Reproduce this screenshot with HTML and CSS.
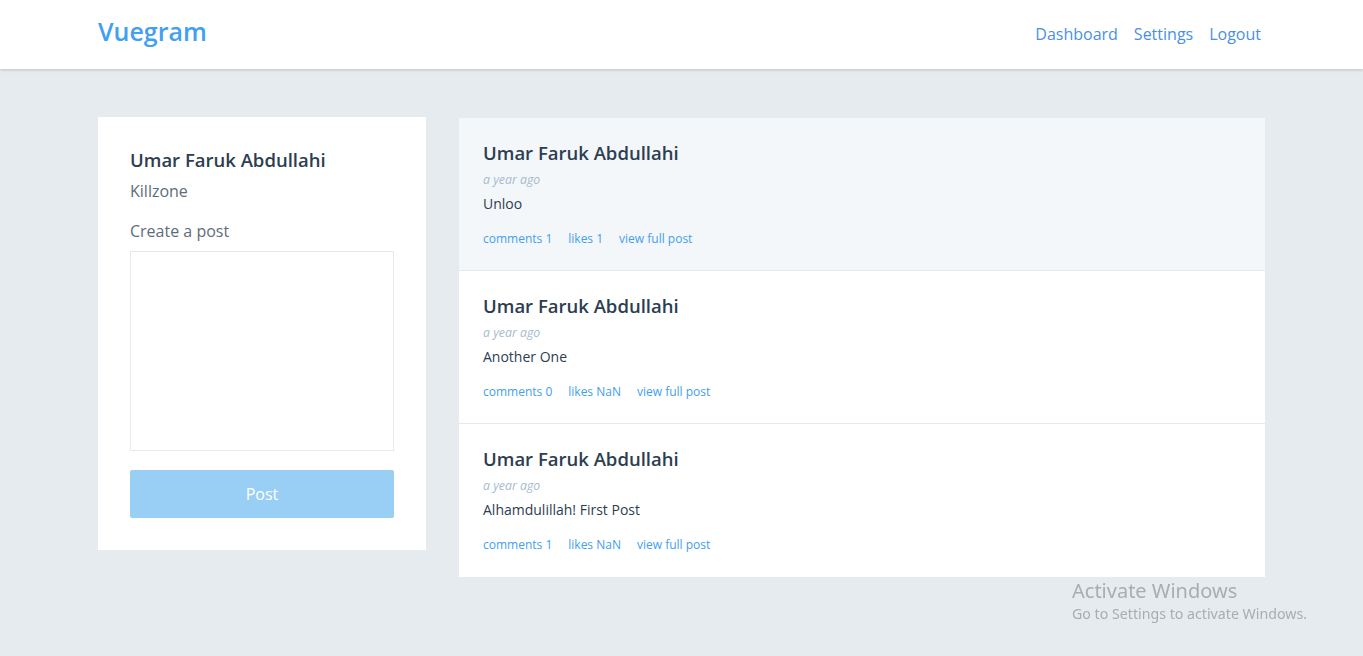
FILE: index.html
```html
<!DOCTYPE html>
<html lang="en">
<head>
<meta charset="utf-8">
<title>Vuegram</title>
<link rel="stylesheet" href="styles.css">
</head>
<body>
<header class="header">
  <div class="container header-inner">
    <a class="logo" href="#">Vuegram</a>
    <nav class="nav">
      <a href="#">Dashboard</a>
      <a href="#">Settings</a>
      <a href="#">Logout</a>
    </nav>
  </div>
</header>
<main class="container main">
  <aside class="profile">
    <h5 class="profile-name">Umar Faruk Abdullahi</h5>
    <p class="profile-title">Killzone</p>
    <p class="create-label">Create a post</p>
    <textarea class="post-input"></textarea>
    <button class="post-btn">Post</button>
  </aside>
  <section class="posts">
    <article class="post post-hover">
      <h5 class="post-name">Umar Faruk Abdullahi</h5>
      <span class="post-date">a year ago</span>
      <p class="post-content">Unloo</p>
      <ul class="post-links">
        <li><a href="#">comments 1</a></li>
        <li><a href="#">likes 1</a></li>
        <li><a href="#">view full post</a></li>
      </ul>
    </article>
    <article class="post">
      <h5 class="post-name">Umar Faruk Abdullahi</h5>
      <span class="post-date">a year ago</span>
      <p class="post-content">Another One</p>
      <ul class="post-links">
        <li><a href="#">comments 0</a></li>
        <li><a href="#">likes NaN</a></li>
        <li><a href="#">view full post</a></li>
      </ul>
    </article>
    <article class="post">
      <h5 class="post-name">Umar Faruk Abdullahi</h5>
      <span class="post-date">a year ago</span>
      <p class="post-content">Alhamdulillah! First Post</p>
      <ul class="post-links">
        <li><a href="#">comments 1</a></li>
        <li><a href="#">likes NaN</a></li>
        <li><a href="#">view full post</a></li>
      </ul>
    </article>
  </section>
</main>
<div class="watermark">
  <div class="wm-title">Activate Windows</div>
  <div class="wm-sub">Go to Settings to activate Windows.</div>
</div>
</body>
</html>
```
FILE: styles.css
```css
* { box-sizing: border-box; }
html, body { margin: 0; padding: 0; }
body {
  background: #e6ebf0;
  font-family: "Open Sans", "Noto Sans", sans-serif;
  color: #2c3e50;
  min-height: 656px;
}
a { text-decoration: none; }
.container {
  width: 1167px;
  margin: 0 auto;
}
.header {
  background: #fff;
  height: 69px;
  box-shadow: 0 1px 3px rgba(0, 0, 0, 0.18);
}
.header-inner {
  display: flex;
  align-items: flex-start;
  justify-content: space-between;
  height: 100%;
}
.logo {
  margin-top: 14px;
  font-size: 25px;
  line-height: 34px;
  font-weight: 600;
  color: #41a0f0;
}
.nav {
  display: flex;
  gap: 16px;
  margin-top: 23px;
  padding-right: 4px;
}
.nav a {
  font-size: 16px;
  line-height: 22px;
  color: #4a90e2;
}
.main {
  display: flex;
  align-items: flex-start;
  gap: 33px;
  padding-top: 48px;
}
.profile {
  width: 328px;
  background: #fff;
  padding: 30px 32px 32px;
  display: flex;
  flex-direction: column;
}
.profile-name {
  margin: 0;
  font-size: 18.5px;
  font-weight: 600;
  line-height: 26px;
  color: #2c3e50;
}
.profile-title {
  margin: 7px 0 0;
  font-size: 16px;
  line-height: 22px;
  color: #5f6c7b;
}
.create-label {
  margin: 18px 0 0;
  font-size: 16px;
  line-height: 22px;
  color: #5f6c7b;
}
.post-input {
  margin-top: 9px;
  width: 264px;
  height: 200px;
  border: 1px solid #e6eaee;
  resize: none;
  font-family: inherit;
  outline: none;
}
.post-btn {
  margin-top: 19px;
  height: 48px;
  width: 264px;
  border: none;
  border-radius: 2px;
  background: #9acff5;
  color: #fff;
  font-family: inherit;
  font-size: 16px;
}
.posts {
  flex: 1;
  margin-top: 1px;
  background: #fff;
}
.post {
  height: 153px;
  padding: 22px 24px 0;
  border-bottom: 1px solid #e6eaee;
  display: flex;
  flex-direction: column;
  align-items: flex-start;
}
.post:last-child { border-bottom: none; }
.post-hover { background: #f4f7fa; }
.post-name {
  margin: 0;
  font-size: 18.5px;
  font-weight: 600;
  line-height: 26px;
  color: #2c3e50;
}
.post-date {
  margin-top: 6px;
  font-size: 12.3px;
  font-style: italic;
  line-height: 16px;
  color: #a6bbcf;
}
.post-content {
  margin: 6px 0 0;
  font-size: 14px;
  line-height: 20px;
  color: #2c3e50;
}
.post-links {
  list-style: none;
  margin: 12px 0 0;
  padding: 0;
  display: flex;
  gap: 16px;
}
.post-links a {
  font-size: 12px;
  line-height: 16px;
  color: #41a0f0;
}
.watermark {
  position: fixed;
  left: 1072px;
  top: 579px;
  color: #a9adb1;
  font-family: "Noto Sans", "Open Sans", sans-serif;
}
.wm-title { font-size: 20px; line-height: 24px; }
.wm-sub { font-size: 14.2px; line-height: 20px; margin-top: 1px; }
```
